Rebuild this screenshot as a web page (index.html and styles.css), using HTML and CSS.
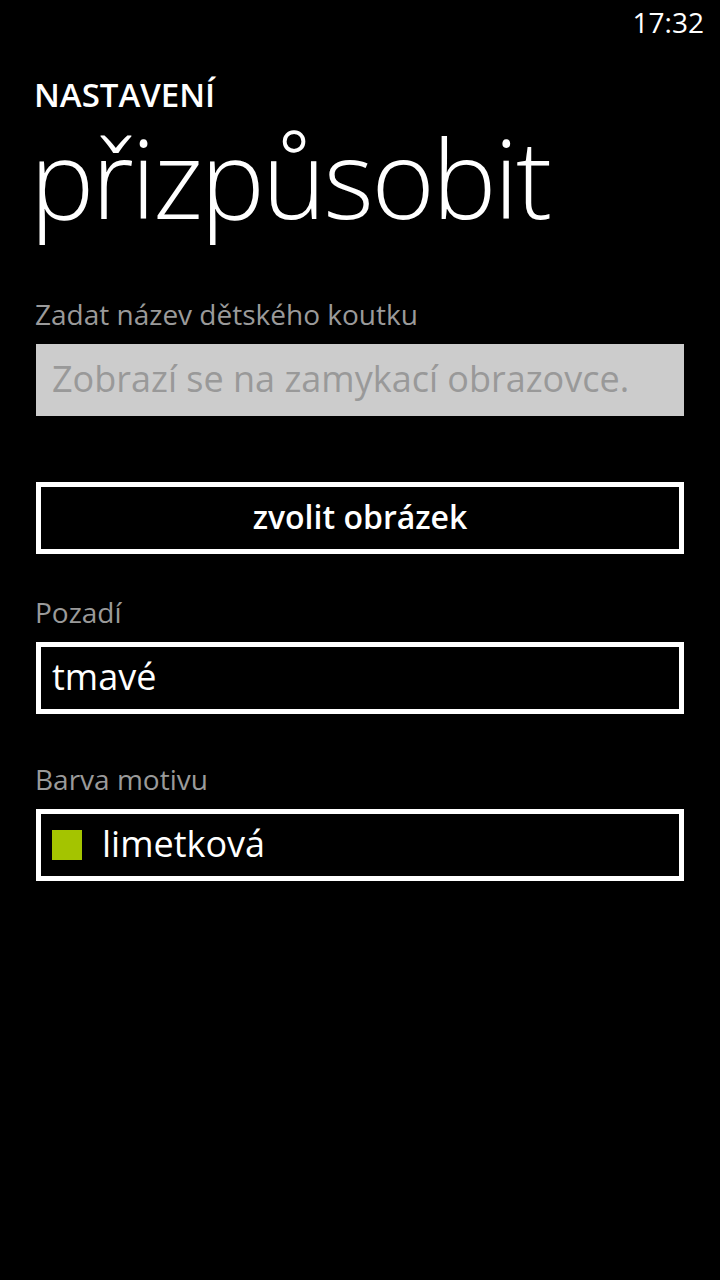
FILE: index.html
```html
<!DOCTYPE html>
<html lang="cs">
<head>
    <meta charset="UTF-8">
    <meta name="viewport" content="width=device-width, initial-scale=1.0">
    <title>Nastavení - přizpůsobit</title>
    <link rel="stylesheet" href="styles.css">
</head>
<body>
    <div class="status-bar">
        <span class="clock">17:32</span>
    </div>

    <header class="page-header">
        <div class="app-title">NASTAVENÍ</div>
        <h1 class="page-title">přizpůsobit</h1>
    </header>

    <main class="settings">
        <div class="field">
            <label class="field-label" for="cornerName">Zadat název dětského koutku</label>
            <input class="text-box" type="text" id="cornerName" placeholder="Zobrazí se na zamykací obrazovce.">
        </div>

        <button class="wide-button" type="button">zvolit obrázek</button>

        <div class="field field-background">
            <div class="field-label">Pozadí</div>
            <div class="picker">tmavé</div>
        </div>

        <div class="field field-accent">
            <div class="field-label">Barva motivu</div>
            <div class="picker">
                <span class="swatch"></span>
                <span>limetková</span>
            </div>
        </div>
    </main>
</body>
</html>
```

FILE: styles.css
```css
body {
    margin: 0;
    padding: 0;
    background-color: #000;
    color: #fff;
    font-family: "Open Sans", "Noto Sans", sans-serif;
    height: 1280px;
    overflow: hidden;
}

.status-bar {
    height: 40px;
    padding: 2px 16px 0 0;
    text-align: right;
}

.clock {
    font-size: 28px;
    line-height: 40px;
    font-weight: 400;
}

.page-header {
    padding-left: 34px;
}

.app-title {
    margin-top: 33px;
    font-size: 33px;
    line-height: 40px;
    font-weight: 600;
}

.page-title {
    margin: 3px 0 0 -4px;
    font-size: 108px;
    line-height: 120px;
    font-weight: 300;
    letter-spacing: -2.5px;
}

.settings {
    padding: 0 36px;
    margin-top: 58px;
}

.field-label {
    display: block;
    margin: 0 0 12px -1px;
    color: #9a9a9a;
    font-size: 28px;
    line-height: 36px;
}

.text-box {
    display: block;
    box-sizing: border-box;
    width: 100%;
    height: 72px;
    margin: 0;
    padding: 0 16px 4px;
    border: none;
    outline: none;
    background-color: #cccccc;
    font-family: inherit;
    font-size: 36px;
    color: #000;
}

.text-box::placeholder {
    color: #999;
}

.wide-button {
    display: block;
    box-sizing: border-box;
    width: 100%;
    height: 72px;
    margin-top: 66px;
    padding: 0 0 4px;
    border: 5px solid #fff;
    background: #000;
    color: #fff;
    font-family: inherit;
    font-size: 32px;
    font-weight: 600;
}

.field-background {
    margin-top: 40px;
}

.field-accent {
    margin-top: 47px;
}

.picker {
    box-sizing: border-box;
    height: 72px;
    border: 5px solid #fff;
    padding: 0 11px 4px;
    display: flex;
    align-items: center;
    gap: 20px;
    font-size: 36px;
}

.swatch {
    width: 30px;
    height: 30px;
    background-color: #a4c400;
    margin-top: 4px;
}
```
